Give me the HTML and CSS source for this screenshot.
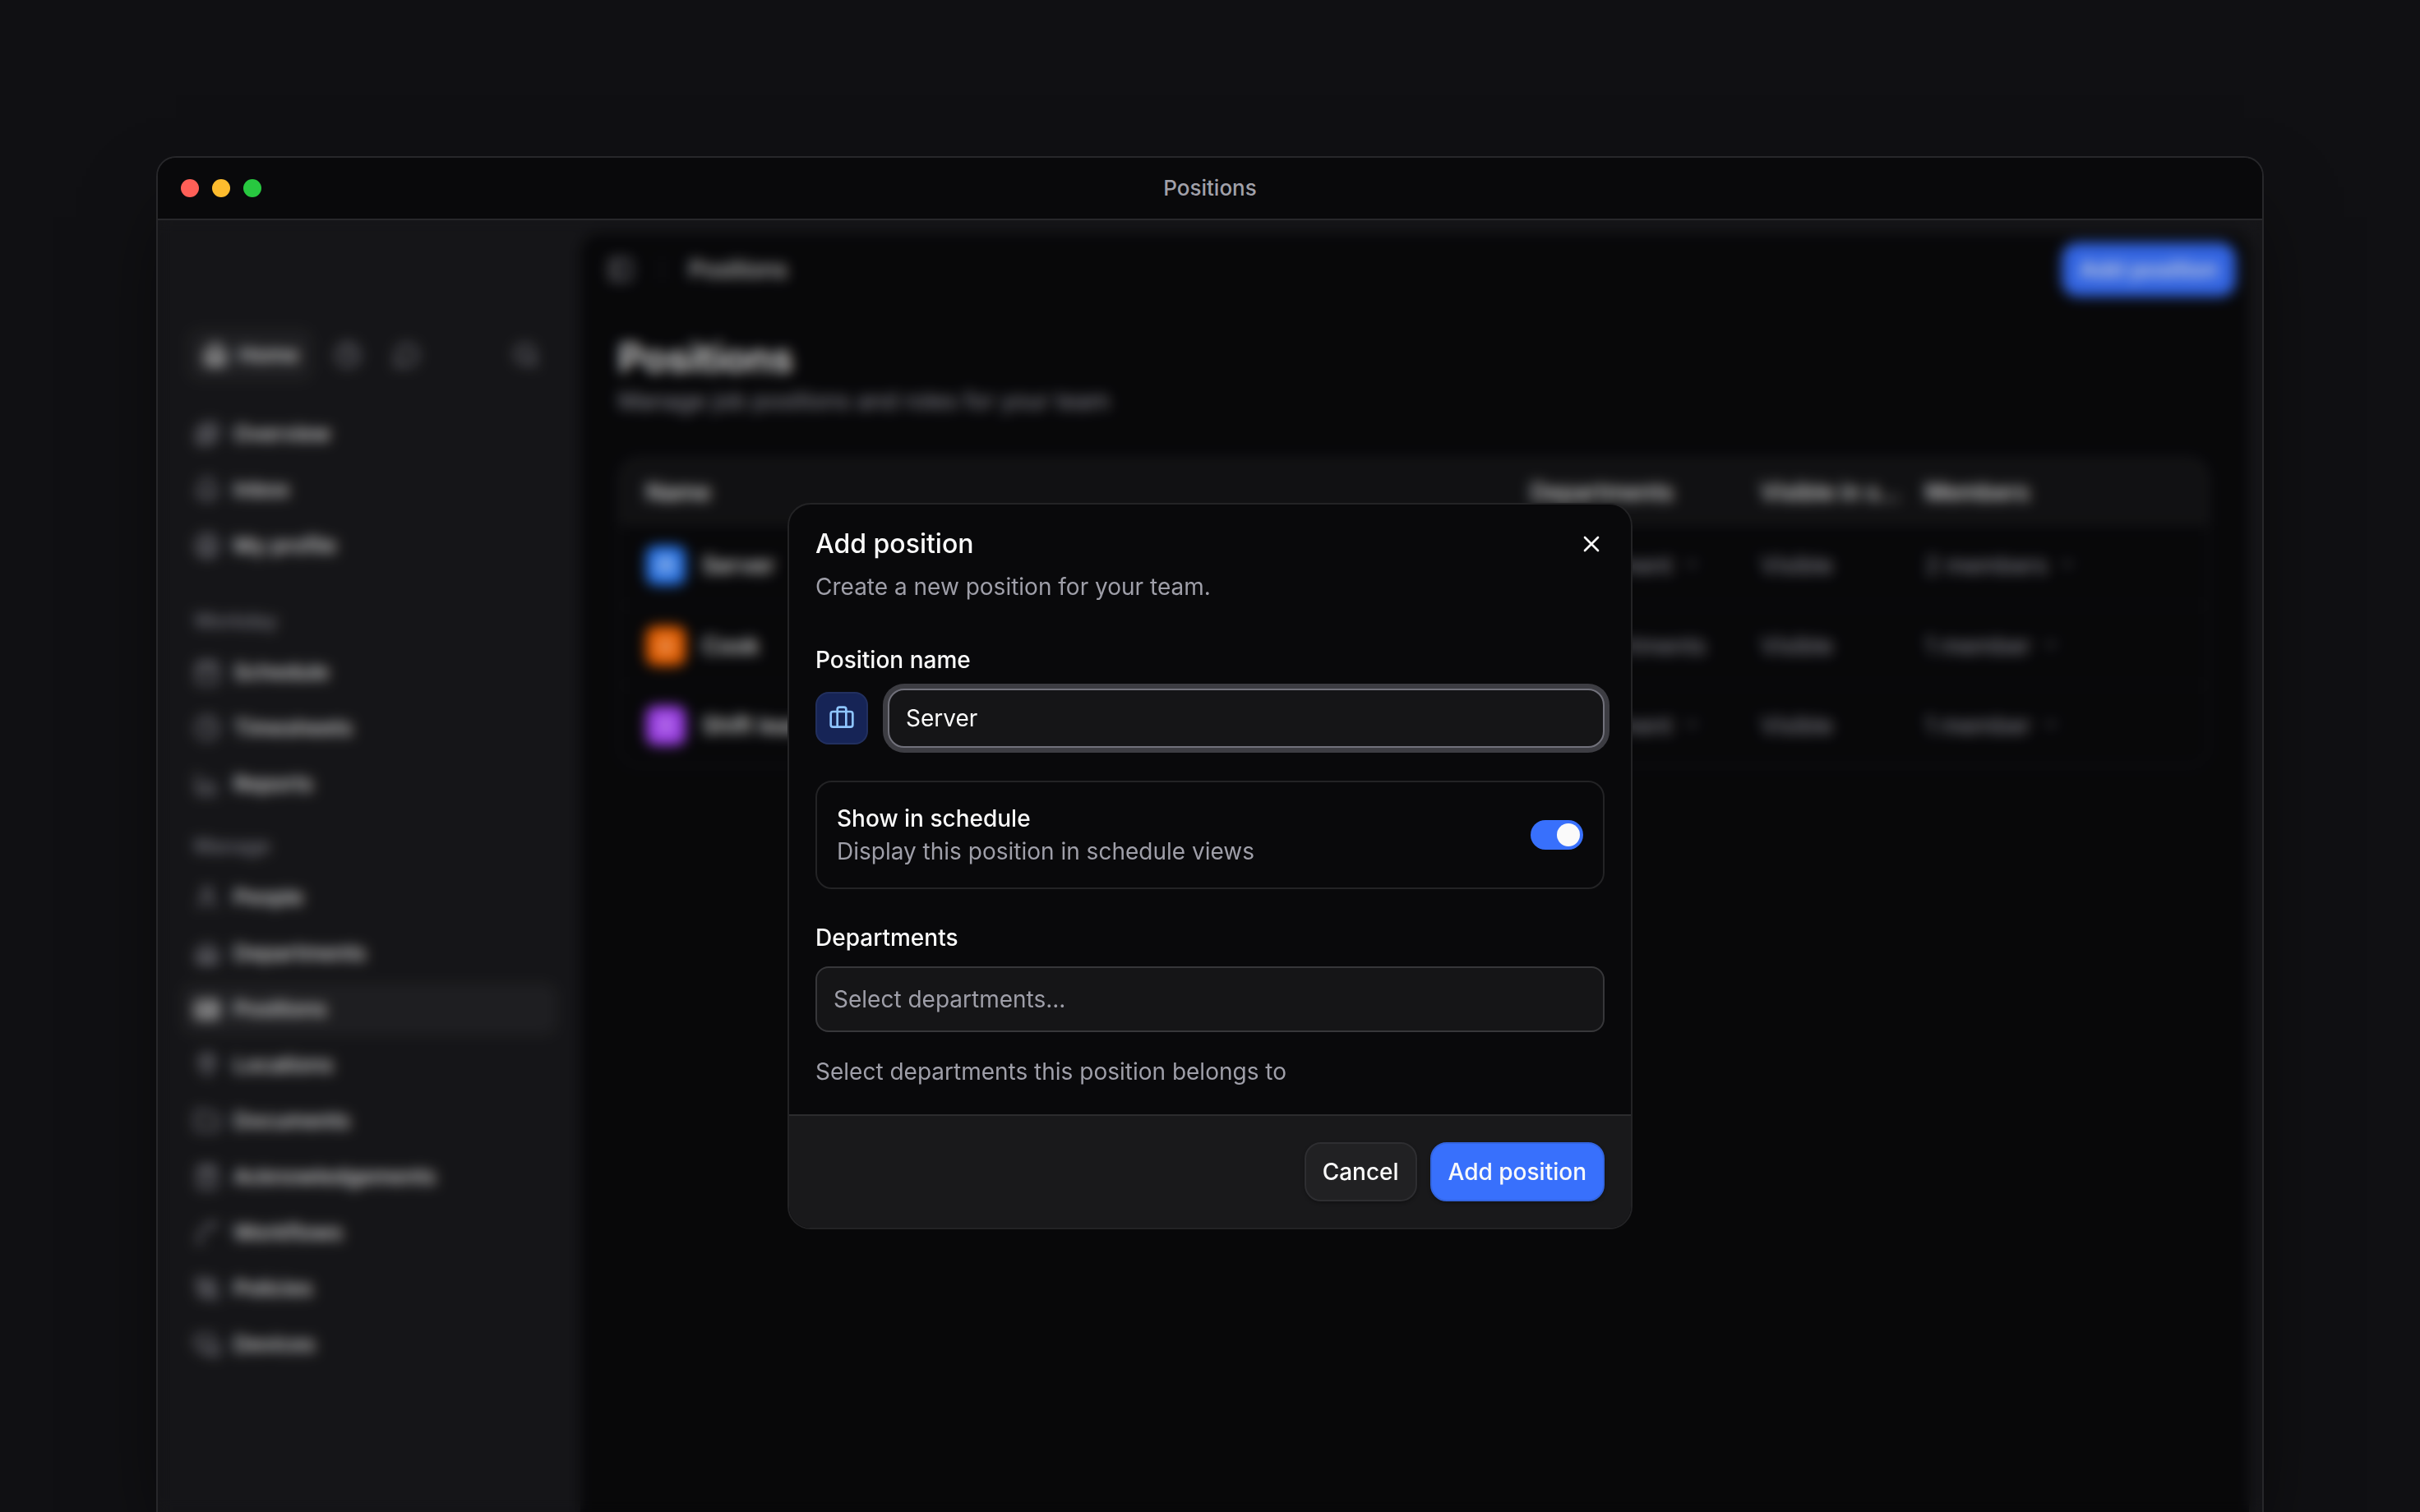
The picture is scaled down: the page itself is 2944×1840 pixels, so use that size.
FILE: index.html
```html
<!DOCTYPE html>
<html lang="en">
<head>
  <meta charset="UTF-8">
  <meta name="viewport" content="width=device-width, initial-scale=1.0">
  <title>Positions</title>
  <link rel="stylesheet" href="styles.css">
</head>
<body>
  <!-- Icon set -->
  <svg class="sprite" aria-hidden="true">
    <symbol id="i-home" viewBox="0 0 24 24"><path fill="currentColor" fill-opacity=".2" d="M3 10a2 2 0 0 1 .7-1.5l7-6a2 2 0 0 1 2.6 0l7 6A2 2 0 0 1 21 10v9a2 2 0 0 1-2 2H5a2 2 0 0 1-2-2z"/><path d="M9 21v-8h6v8"/></symbol>
    <symbol id="i-clock" viewBox="0 0 24 24"><circle cx="12" cy="12" r="10"/><path d="M12 6v6l4 2"/></symbol>
    <symbol id="i-chat" viewBox="0 0 24 24"><path d="M7.9 20A9 9 0 1 0 4 16.1L2 22z"/></symbol>
    <symbol id="i-search" viewBox="0 0 24 24"><circle cx="11" cy="11" r="8"/><path d="m21 21-4.3-4.3"/></symbol>
    <symbol id="i-overview" viewBox="0 0 24 24"><rect x="3" y="8" width="13" height="13" rx="2"/><path d="M8 8V5a2 2 0 0 1 2-2h9a2 2 0 0 1 2 2v9a2 2 0 0 1-2 2h-3M7 13h5M7 17h5"/></symbol>
    <symbol id="i-bell" viewBox="0 0 24 24"><path d="M10.3 21a2 2 0 0 0 3.4 0M3.3 15.3A1 1 0 0 0 4 17h16a1 1 0 0 0 .7-1.7C19.400 14 18 12.500 18 8A6 6 0 0 0 6 8c0 4.500-1.400 6-2.700 7.300"/></symbol>
    <symbol id="i-profile" viewBox="0 0 24 24"><circle cx="12" cy="12" r="10"/><circle cx="12" cy="10" r="3"/><path d="M7 20.700V19a2 2 0 0 1 2-2h6a2 2 0 0 1 2 2v1.700"/></symbol>
    <symbol id="i-calendar" viewBox="0 0 24 24"><rect x="3" y="4" width="18" height="18" rx="2"/><path d="M8 2v4M16 2v4M3 10h18"/></symbol>
    <symbol id="i-chart" viewBox="0 0 24 24"><path d="M3 3v16a2 2 0 0 0 2 2h16M8 17v-4M13 17V9M18 17v-6"/></symbol>
    <symbol id="i-user" viewBox="0 0 24 24"><circle cx="12" cy="7" r="4"/><path d="M19 21v-2a4 4 0 0 0-4-4H9a4 4 0 0 0-4 4v2"/></symbol>
    <symbol id="i-building" viewBox="0 0 24 24"><path d="M3 21V10l9-6 9 6v11zM8 21v-8h8v8M8 17h8"/></symbol>
    <symbol id="i-badge" viewBox="0 0 24 24"><rect x="2" y="5" width="20" height="15" rx="2" fill="currentColor" fill-opacity=".3"/><path d="M6 15h5M15 10h3M15 15h3"/></symbol>
    <symbol id="i-pin" viewBox="0 0 24 24"><path d="M19 9c0 5-7 12-7 12S5 14 5 9a7 7 0 0 1 14 0z"/><circle cx="12" cy="9" r="2"/></symbol>
    <symbol id="i-folder" viewBox="0 0 24 24"><path d="M20 20a2 2 0 0 0 2-2V8a2 2 0 0 0-2-2h-8l-2-3H4a2 2 0 0 0-2 2v13a2 2 0 0 0 2 2z"/></symbol>
    <symbol id="i-clipboard" viewBox="0 0 24 24"><rect x="4" y="3" width="16" height="19" rx="2"/><path d="M8 3h8v4H8zM9 14l2 2 4-4"/></symbol>
    <symbol id="i-flow" viewBox="0 0 24 24"><path d="M5 21v-4a12 12 0 0 1 12-12h4M3 21h4M17 3v4"/></symbol>
    <symbol id="i-policy" viewBox="0 0 24 24"><path d="M19 11V7a2 2 0 0 0-2-2h-2L3 3v4a2 2 0 0 0 2 2v8a2 2 0 0 0 2 2h4M8 9h7M8 13h4"/><circle cx="16" cy="16" r="4"/><path d="m19 19 3 3"/></symbol>
    <symbol id="i-device" viewBox="0 0 24 24"><path d="M18 8V6a2 2 0 0 0-2-2H4a2 2 0 0 0-2 2v7a2 2 0 0 0 2 2h8M10 19v-4M7 19h5"/><rect x="16" y="12" width="6" height="10" rx="2"/></symbol>
    <symbol id="i-panel" viewBox="0 0 24 24"><rect x="3" y="3" width="18" height="18" rx="2"/><path d="M9 3v18"/></symbol>
    <symbol id="i-chevron" viewBox="0 0 24 24"><path d="m6 9 6 6 6-6"/></symbol>
    <symbol id="i-briefcase" viewBox="0 0 24 24"><path d="M16 20V4a2 2 0 0 0-2-2h-4a2 2 0 0 0-2 2v16"/><rect x="2" y="6" width="20" height="14" rx="2"/></symbol>
    <symbol id="i-close" viewBox="0 0 24 24"><path d="M18 6 6 18M6 6l12 12"/></symbol>
  </svg>

  <div class="window">
    <header class="titlebar">
      <div class="lights">
        <span class="light red"></span>
        <span class="light yellow"></span>
        <span class="light green"></span>
      </div>
      <span class="window-title">Positions</span>
    </header>

    <div class="app">
      <nav class="sidebar">
        <div class="switcher">
          <a class="home" href="#home"><svg class="icon"><use href="#i-home"/></svg>Home</a>
          <button class="switch-btn" type="button" aria-label="Time"><svg class="icon"><use href="#i-clock"/></svg></button>
          <button class="switch-btn" type="button" aria-label="Chat"><svg class="icon"><use href="#i-chat"/></svg></button>
          <button class="switch-btn last" type="button" aria-label="Search"><svg class="icon"><use href="#i-search"/></svg></button>
        </div>

        <div class="nav-group first">
          <a class="nav-item" href="#overview"><svg class="icon"><use href="#i-overview"/></svg>Overview</a>
          <a class="nav-item" href="#inbox"><svg class="icon"><use href="#i-bell"/></svg>Inbox</a>
          <a class="nav-item" href="#profile"><svg class="icon"><use href="#i-profile"/></svg>My profile</a>
        </div>

        <h2 class="nav-label">Workday</h2>
        <div class="nav-group">
          <a class="nav-item" href="#schedule"><svg class="icon"><use href="#i-calendar"/></svg>Schedule</a>
          <a class="nav-item" href="#timesheets"><svg class="icon"><use href="#i-clock"/></svg>Timesheets</a>
          <a class="nav-item" href="#reports"><svg class="icon"><use href="#i-chart"/></svg>Reports</a>
        </div>

        <h2 class="nav-label">Manage</h2>
        <div class="nav-group">
          <a class="nav-item" href="#people"><svg class="icon"><use href="#i-user"/></svg>People</a>
          <a class="nav-item" href="#departments"><svg class="icon"><use href="#i-building"/></svg>Departments</a>
          <a class="nav-item active" href="#positions"><svg class="icon"><use href="#i-badge"/></svg>Positions</a>
          <a class="nav-item" href="#locations"><svg class="icon"><use href="#i-pin"/></svg>Locations</a>
          <a class="nav-item" href="#documents"><svg class="icon"><use href="#i-folder"/></svg>Documents</a>
          <a class="nav-item" href="#acknowledgements"><svg class="icon"><use href="#i-clipboard"/></svg>Acknowledgements</a>
          <a class="nav-item" href="#workflows"><svg class="icon"><use href="#i-flow"/></svg>Workflows</a>
          <a class="nav-item" href="#policies"><svg class="icon"><use href="#i-policy"/></svg>Policies</a>
          <a class="nav-item" href="#devices"><svg class="icon"><use href="#i-device"/></svg>Devices</a>
        </div>
      </nav>

      <main class="main">
        <div class="topbar">
          <button class="panel-btn" type="button" aria-label="Toggle sidebar"><svg class="icon"><use href="#i-panel"/></svg></button>
          <span class="divider"></span>
          <span class="crumb">Positions</span>
          <button class="btn primary topbar-add" type="button">Add position</button>
        </div>
        <div class="content">
          <h1>Positions</h1>
          <p class="lead">Manage job positions and roles for your team</p>
          <div class="table-wrap">
            <table>
              <thead>
                <tr>
                  <th>Name</th>
                  <th class="col-dep">Departments</th>
                  <th class="col-vis">Visible in s…</th>
                  <th class="col-mem">Members</th>
                </tr>
              </thead>
              <tbody>
                <tr>
                  <td><div class="pos"><span class="tile blue"><svg class="icon"><use href="#i-briefcase"/></svg></span>Server</div></td>
                  <td>1 department <svg class="chev"><use href="#i-chevron"/></svg></td>
                  <td>Visible</td>
                  <td>2 members <svg class="chev"><use href="#i-chevron"/></svg></td>
                </tr>
                <tr>
                  <td><div class="pos"><span class="tile orange"><svg class="icon"><use href="#i-bell"/></svg></span>Cook</div></td>
                  <td>No departments</td>
                  <td>Visible</td>
                  <td>1 member <svg class="chev"><use href="#i-chevron"/></svg></td>
                </tr>
                <tr>
                  <td><div class="pos"><span class="tile purple"><svg class="icon"><use href="#i-user"/></svg></span>Shift lead</div></td>
                  <td>1 department <svg class="chev"><use href="#i-chevron"/></svg></td>
                  <td>Visible</td>
                  <td>1 member <svg class="chev"><use href="#i-chevron"/></svg></td>
                </tr>
              </tbody>
            </table>
          </div>
        </div>
      </main>

      <!-- Add position dialog -->
      <div class="overlay">
        <form class="dialog" role="dialog" aria-labelledby="dialog-title" aria-describedby="dialog-desc">
          <div class="dialog-body">
            <div class="dialog-head">
              <h2 id="dialog-title">Add position</h2>
              <button class="close" type="button" aria-label="Close"><svg class="icon"><use href="#i-close"/></svg></button>
            </div>
            <p class="muted" id="dialog-desc">Create a new position for your team.</p>

            <div class="field name-field">
              <label for="position-name">Position name</label>
              <div class="name-row">
                <button class="icon-picker" type="button" aria-label="Choose icon"><svg class="icon"><use href="#i-briefcase"/></svg></button>
                <input class="text-input focused" type="text" id="position-name" value="Server">
              </div>
            </div>

            <div class="card">
              <div>
                <label for="show-schedule">Show in schedule</label>
                <p class="muted">Display this position in schedule views</p>
              </div>
              <input class="switch" type="checkbox" role="switch" id="show-schedule" checked>
            </div>

            <div class="field">
              <label for="departments">Departments</label>
              <input class="text-input tall" type="text" id="departments" placeholder="Select departments...">
            </div>
            <p class="muted hint">Select departments this position belongs to</p>
          </div>
          <div class="dialog-foot">
            <button class="btn secondary" type="button">Cancel</button>
            <button class="btn primary" type="submit">Add position</button>
          </div>
        </form>
      </div>
    </div>
  </div>
</body>
</html>
```
FILE: styles.css
```css
* {
  box-sizing: border-box;
}
body {
  margin: 0;
  height: 100vh;
  padding: 190px 190px 0;
  display: flex;
  overflow: hidden;
  background-color: #101013;
  color: #fafafa;
  font-family: Inter, "Liberation Sans", sans-serif;
  font-size: 28px;
  line-height: 40px;
}
h1, h2, p {
  margin: 0;
}
a {
  color: inherit;
  text-decoration: none;
}
button, input {
  font: inherit;
  color: inherit;
}
button {
  padding: 0;
  border: none;
  background: none;
  cursor: pointer;
}
.sprite {
  position: absolute;
  width: 0;
  height: 0;
}
.icon {
  width: 32px;
  height: 32px;
  flex: none;
  fill: none;
  stroke: currentColor;
  stroke-width: 2;
  stroke-linecap: round;
  stroke-linejoin: round;
}

/* Window */
.window {
  flex: 1;
  display: flex;
  flex-direction: column;
  border: 2px solid #27272a;
  border-bottom: none;
  border-radius: 24px 24px 0 0;
  overflow: hidden;
  box-shadow: 0 50px 100px -24px rgba(0, 0, 0, 0.7);
}
.titlebar {
  display: grid;
  grid-template-columns: 1fr auto 1fr;
  align-items: center;
  height: 76px;
  flex: none;
  padding: 0 28px;
  background-color: #09090b;
  border-bottom: 2px solid #27272a;
}
.lights {
  display: flex;
  gap: 16px;
}
.light {
  width: 22px;
  height: 22px;
  border-radius: 50%;
}
.red { background-color: #ff5f57; }
.yellow { background-color: #febc2e; }
.green { background-color: #28c840; }
.window-title {
  font-size: 26px;
  font-weight: 500;
  color: #a1a1aa;
}
.app {
  position: relative;
  flex: 1;
  display: flex;
  overflow: hidden;
  background-color: #18181b;
}

/* Sidebar */
.sidebar {
  width: 514px;
  flex: none;
  padding: 132px 28px 0;
  font-size: 26px;
  font-weight: 500;
}
.switcher {
  display: flex;
  gap: 12px;
  padding: 0 8px;
  margin-bottom: 32px;
}
.home {
  display: flex;
  align-items: center;
  gap: 12px;
  height: 64px;
  padding: 0 18px;
  border-radius: 16px;
  background-color: #222225;
}
.switch-btn {
  display: grid;
  place-items: center;
  width: 60px;
  height: 64px;
  color: #9f9fa9;
}
.last {
  margin-left: auto;
}
.nav-group {
  display: flex;
  flex-direction: column;
  gap: 4px;
  margin-bottom: 14px;
}
.nav-group.first {
  margin-bottom: 30px;
}
.nav-item {
  display: flex;
  align-items: center;
  gap: 16px;
  height: 64px;
  padding: 0 16px;
  border-radius: 16px;
}
.nav-item .icon {
  color: #9f9fa9;
}
.nav-item.active {
  background-color: #222225;
}
.nav-item.active .icon {
  color: #fafafa;
}
.nav-label {
  padding: 0 16px;
  font-size: 24px;
  font-weight: 500;
  line-height: 60px;
  color: #8a8a94;
}

/* Main panel */
.main {
  flex: 1;
  min-width: 0;
  margin: 16px 16px 0 0;
  border-radius: 24px 24px 0 0;
  background-color: #09090b;
}
.topbar {
  display: flex;
  align-items: center;
  height: 88px;
  padding: 0 16px;
}
.panel-btn {
  display: grid;
  place-items: center;
  width: 66px;
  height: 64px;
  color: #a1a1aa;
}
.divider {
  width: 2px;
  height: 32px;
  margin: 0 32px 0 16px;
  background-color: #27272a;
}
.content {
  padding: 32px 48px 0 46px;
}
.content h1 {
  font-size: 48px;
  font-weight: 600;
  line-height: 64px;
}
.lead {
  color: #9f9fa9;
}
.table-wrap {
  margin-top: 48px;
  border: 2px solid #1c1c1f;
  border-radius: 24px;
  overflow: hidden;
}
table {
  width: 100%;
  table-layout: fixed;
  border-collapse: collapse;
}
th {
  height: 82px;
  padding: 0 16px;
  text-align: left;
  font-weight: 500;
  background-color: #141416;
  white-space: nowrap;
}
td {
  height: 97px;
  padding: 0 16px;
  border-bottom: 2px solid #151517;
  color: #9f9fa9;
  white-space: nowrap;
}
tr:last-child td {
  border-bottom: none;
}
th:first-child, td:first-child {
  padding-left: 32px;
}
.col-dep { width: 280px; }
.col-vis { width: 200px; }
.col-mem { width: 360px; }
.pos {
  display: flex;
  align-items: center;
  gap: 20px;
  font-weight: 500;
  color: #fafafa;
}
.tile {
  display: grid;
  place-items: center;
  width: 48px;
  height: 48px;
  border-radius: 12px;
  color: #ffffff;
}
.tile .icon {
  width: 24px;
  height: 24px;
}
.blue { background-color: #2b7fff; }
.orange { background-color: #ff6900; }
.purple { background-color: #ad46ff; }
.chev {
  width: 24px;
  height: 24px;
  margin-left: 4px;
  fill: none;
  stroke: #71717a;
  stroke-width: 2;
}

/* Buttons */
.btn {
  height: 72px;
  padding: 0 20px;
  border: 2px solid transparent;
  border-radius: 20px;
  font-weight: 500;
  box-shadow: 0 2px 4px rgba(0, 0, 0, 0.3);
}
.primary {
  background-color: #3870fc;
  border-color: #3365e0;
}
.secondary {
  background-color: #212123;
  border-color: #2e2e31;
}
.topbar-add {
  height: 66px;
  margin-left: auto;
}

/* Dialog */
.overlay {
  position: absolute;
  inset: 0;
  display: grid;
  place-items: center;
  background-color: rgba(0, 0, 0, 0.1);
  backdrop-filter: blur(8px);
}
.dialog {
  width: 1028px;
  max-width: 100%;
  border: 2px solid #232325;
  border-radius: 28px;
  background-color: #09090b;
  overflow: hidden;
}
.dialog-body {
  padding: 32px;
}
.dialog-head {
  display: flex;
  justify-content: space-between;
  align-items: center;
  height: 32px;
  margin-bottom: 16px;
}
.dialog-head h2 {
  font-size: 32px;
  font-weight: 500;
}
.close {
  display: grid;
  place-items: center;
  width: 32px;
  height: 32px;
}
.muted {
  color: #9f9fa9;
}
.field {
  display: flex;
  flex-direction: column;
  gap: 16px;
}
.field label {
  font-weight: 500;
  line-height: 38px;
}
.name-field {
  margin-top: 50px;
}
.name-row {
  display: flex;
  align-items: center;
  gap: 24px;
}
.icon-picker {
  display: grid;
  place-items: center;
  flex: none;
  width: 64px;
  height: 64px;
  border: 2px solid #22305f;
  border-radius: 16px;
  background-color: #162456;
  color: #8ec5ff;
}
.text-input {
  width: 100%;
  height: 72px;
  padding: 0 20px;
  border: 2px solid #37373a;
  border-radius: 20px;
  background-color: #151517;
  outline: none;
}
.text-input::placeholder {
  color: #9f9fa9;
  opacity: 1;
}
.focused {
  border-color: #71717b;
  box-shadow: 0 0 0 6px #3d3d43;
}
.tall {
  height: 80px;
  border-radius: 16px;
}
.card {
  display: flex;
  justify-content: space-between;
  align-items: center;
  margin: 40px 0;
  padding: 24px;
  border: 2px solid #232325;
  border-radius: 20px;
}
.card label {
  display: block;
  font-weight: 500;
}
.switch {
  appearance: none;
  display: flex;
  align-items: center;
  flex: none;
  width: 64px;
  height: 36px;
  margin: 0;
  padding: 0 4px;
  border-radius: 18px;
  background-color: #3f3f46;
}
.switch::before {
  content: "";
  width: 28px;
  height: 28px;
  border-radius: 50%;
  background-color: #fafafa;
}
.switch:checked {
  justify-content: flex-end;
  background-color: #3870fc;
}
.hint {
  margin-top: 28px;
}
.dialog-foot {
  display: flex;
  justify-content: flex-end;
  gap: 16px;
  padding: 32px;
  border-top: 2px solid #2c2c2e;
  background-color: #19191b;
}
```
